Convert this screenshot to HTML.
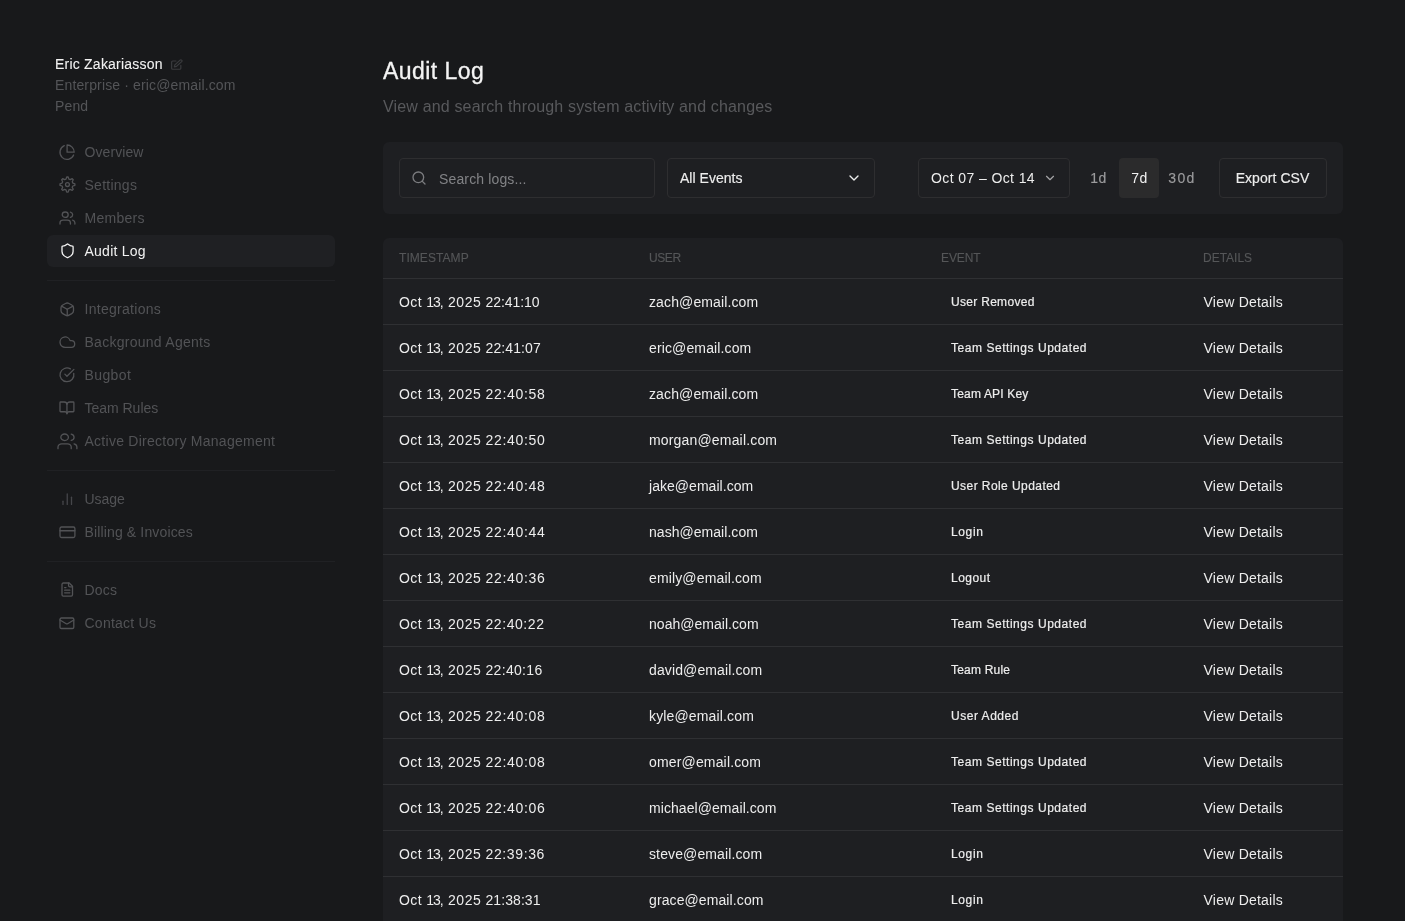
<!DOCTYPE html>
<html lang="en">
<head>
<meta charset="utf-8">
<title>Audit Log</title>
<style>
*{box-sizing:border-box;margin:0;padding:0}
html,body{width:1405px;height:921px;overflow:hidden;background:#18191b}
body{font-family:"Liberation Sans",Arial,sans-serif;color:#ededed;position:relative;-webkit-font-smoothing:antialiased}
#app{position:absolute;left:0;top:0;width:1405px;height:921px;will-change:transform}
.abs{position:absolute;white-space:nowrap}
/* sidebar */
.uname{left:55px;top:55px;font-size:14px;line-height:18px;color:#f2f2f2;letter-spacing:.22px;-webkit-text-stroke:.08px #f2f2f2}
.usub{left:55px;font-size:14px;line-height:18px;color:#545558;letter-spacing:.14px}
.nav{left:47px;width:288px;height:32px;border-radius:6px;font-size:14px;line-height:32px;color:#525356;padding-left:37.5px;letter-spacing:.2px}
.nav.on{background:#1f2023;color:#f2f2f2}
.ic{fill:none;stroke-width:1.3;stroke-linecap:round;stroke-linejoin:round;overflow:visible}
.ic *{vector-effect:non-scaling-stroke}
.hr{left:47px;width:288px;height:1px;background:#202124}
/* main */
h1{left:383px;top:56px;font-size:23px;line-height:30px;font-weight:400;color:#f4f4f4;letter-spacing:.45px;-webkit-text-stroke:.3px #f4f4f4}
.sub{left:383px;top:97px;font-size:16px;line-height:20px;color:#58595c;letter-spacing:.16px}
.card{left:383px;width:960px;background:#1e1f22;border-radius:6px}
.inp{top:158px;height:40px;border:1px solid #2e2e30;border-radius:4px;font-size:14px;line-height:38px;color:#ededed;background:#1e1f22}
.btn-t{top:158px;height:40px;line-height:40px;font-size:14px;color:#9b9b9d;letter-spacing:.4px;-webkit-text-stroke:.15px #9b9b9d;text-align:center;border-radius:4px;padding-left:1px}
table{border-collapse:collapse}
.th{top:238px;height:40px;line-height:40px;font-size:12px;color:#555658;letter-spacing:0;-webkit-text-stroke:.12px #555658}
.row{left:383px;width:960px;height:46px;border-top:1px solid #2f3033}
.row span{position:absolute;top:0;line-height:46px;white-space:nowrap}
.c1{left:16px;font-size:14px;color:#ededed}
.c1 b{position:absolute;top:0;font-weight:400;white-space:pre}
.d1{left:0;letter-spacing:.42px}
.d2{left:27.2px;letter-spacing:-.98px}
.d3{left:48.95px;letter-spacing:.57px}
.d4{left:86.5px}
.c2{left:266px;font-size:14px;color:#ededed}
.c3{left:568px;font-size:12px;color:#ededed;-webkit-text-stroke:.2px #ededed}
.c4{left:820.5px;font-size:14px;letter-spacing:.23px;color:#ededed}
</style>
</head>
<body>
<div id="app">
<!-- SIDEBAR -->
<div class="abs uname">Eric Zakariasson</div>
<svg class="abs" style="left:170px;top:58.8px;width:13px;height:11.8px;fill:none;stroke:#3a3b3e;stroke-width:2.2;stroke-linecap:round;stroke-linejoin:round" viewBox="0 0 24 24" preserveAspectRatio="none"><path d="M11 4H5a2 2 0 0 0-2 2v13a2 2 0 0 0 2 2h13a2 2 0 0 0 2-2v-6"/><path d="M18.5 2.5a2.1 2.1 0 0 1 3 3L12 15l-4 1 1-4z"/></svg>
<div class="abs usub" style="top:76px">Enterprise · eric@email.com</div>
<div class="abs usub" style="top:97px">Pend</div>

<div class="abs nav" style="top:136px;letter-spacing:0.09px">Overview</div>
<div class="abs nav" style="top:169px;letter-spacing:0.26px">Settings</div>
<div class="abs nav" style="top:202px;letter-spacing:0.27px">Members</div>
<div class="abs nav on" style="top:235px;letter-spacing:0.25px">Audit Log</div>
<div class="abs hr" style="top:280px"></div>
<div class="abs nav" style="top:293px;letter-spacing:0.29px">Integrations</div>
<div class="abs nav" style="top:326px;letter-spacing:0.27px">Background Agents</div>
<div class="abs nav" style="top:359px;letter-spacing:0.40px">Bugbot</div>
<div class="abs nav" style="top:392px;letter-spacing:-0.02px">Team Rules</div>
<div class="abs nav" style="top:425px;letter-spacing:0.26px">Active Directory Management</div>
<div class="abs hr" style="top:470px"></div>
<div class="abs nav" style="top:483px;letter-spacing:-0.05px">Usage</div>
<div class="abs nav" style="top:516px;letter-spacing:0.14px">Billing &amp; Invoices</div>
<div class="abs hr" style="top:561px"></div>
<div class="abs nav" style="top:574px;letter-spacing:0.20px">Docs</div>
<div class="abs nav" style="top:607px;letter-spacing:0.24px">Contact Us</div>
<!-- ICONS -->
<svg class="abs ic" style="left:59.90px;top:144.65px;width:14.20px;height:14.45px;stroke:#525356" viewBox="2.00 2.00 20.00 20.00" preserveAspectRatio="none"><path d="M21.21 15.89A10 10 0 1 1 8 2.83"/><path d="M22 12A10 10 0 0 0 12 2v10z"/></svg>
<svg class="abs ic" style="left:59.55px;top:177.35px;width:14.90px;height:15.10px;stroke:#525356" viewBox="2.05 2.05 19.90 19.90" preserveAspectRatio="none"><circle cx="12" cy="12" r="2.6"/><path d="M10.08 4.85L11.04 2.05L12.96 2.05L13.92 4.85L15.70 5.59L18.36 4.28L19.72 5.64L18.41 8.30L19.15 10.08L21.95 11.04L21.95 12.96L19.15 13.92L18.41 15.70L19.72 18.36L18.36 19.72L15.70 18.41L13.92 19.15L12.96 21.95L11.04 21.95L10.08 19.15L8.30 18.41L5.64 19.72L4.28 18.36L5.59 15.70L4.85 13.92L2.05 12.96L2.05 11.04L4.85 10.08L5.59 8.30L4.28 5.64L5.64 4.28L8.30 5.59Z"/></svg>
<svg class="abs ic" style="left:59.55px;top:211.85px;width:14.90px;height:12.10px;stroke:#525356" viewBox="2.00 3.00 20.00 18.00" preserveAspectRatio="none"><path d="M16 21v-2a4 4 0 0 0-4-4H6a4 4 0 0 0-4 4v2"/><circle cx="9" cy="7" r="4"/><path d="M22 21v-2a4 4 0 0 0-3-3.870"/><path d="M16 3.130a4 4 0 0 1 0 7.750"/></svg>
<svg class="abs ic" style="left:61.55px;top:244.15px;width:11.10px;height:13.60px;stroke:#f2f2f2" viewBox="4.00 2.00 16.00 20.00" preserveAspectRatio="none"><path d="M20 13c0 5-3.500 7.500-7.660 8.950a1 1 0 0 1-.67-.010C7.500 20.500 4 18 4 13V6a1 1 0 0 1 1-1c2 0 4.500-1.200 6.240-2.720a1.170 1.170 0 0 1 1.520 0C14.510 3.810 17 5 19 5a1 1 0 0 1 1 1z"/></svg>
<svg class="abs ic" style="left:60.85px;top:303.15px;width:12.50px;height:12.70px;stroke:#525356" viewBox="3.34 2.70 17.32 18.80" preserveAspectRatio="none"><path d="M9.58 3.40Q12.00 2.00 14.42 3.40L18.24 5.60Q20.66 7.00 20.66 9.80L20.66 14.20Q20.66 17.00 18.24 18.40L14.42 20.60Q12.00 22.00 9.58 20.60L5.76 18.40Q3.34 17.00 3.34 14.20L3.34 9.80Q3.34 7.00 5.76 5.60Z"/><path d="M4 7.400 12 12l8-4.600"/><path d="M12 21.500V12"/></svg>
<svg class="abs ic" style="left:59.65px;top:337.15px;width:14.70px;height:10.30px;stroke:#525356" viewBox="2.00 5.00 20.00 14.00" preserveAspectRatio="none"><path d="M17.500 19H9a7 7 0 1 1 6.710-9h1.790a4.500 4.500 0 1 1 0 9z"/></svg>
<svg class="abs ic" style="left:60.15px;top:368.45px;width:13.90px;height:13.70px;stroke:#525356" viewBox="2.00 2.00 20.00 20.00" preserveAspectRatio="none"><path d="M21.800 10A10 10 0 1 1 17 3.340"/><path d="m9 11 3 3L22 4"/></svg>
<svg class="abs ic" style="left:60.15px;top:401.65px;width:13.90px;height:11.70px;stroke:#525356" viewBox="2.00 3.00 20.00 18.00" preserveAspectRatio="none"><path d="M12 7v14"/><path d="M3 18a1 1 0 0 1-1-1V4a1 1 0 0 1 1-1h5a4 4 0 0 1 4 4 4 4 0 0 1 4-4h5a1 1 0 0 1 1 1v13a1 1 0 0 1-1 1h-6a3 3 0 0 0-3 3 3 3 0 0 0-3-3z"/></svg>
<svg class="abs ic" style="left:57.65px;top:433.65px;width:18.90px;height:14.70px;stroke:#525356" viewBox="2.00 3.00 20.00 18.00" preserveAspectRatio="none"><path d="M16 21v-2a4 4 0 0 0-4-4H6a4 4 0 0 0-4 4v2"/><circle cx="9" cy="7" r="4"/><path d="M22 21v-2a4 4 0 0 0-3-3.870"/><path d="M16 3.130a4 4 0 0 1 0 7.750"/></svg>
<svg class="abs ic" style="left:62.95px;top:493.65px;width:8.50px;height:10.40px;stroke:#45464a" viewBox="6.00 4.00 12.00 16.00" preserveAspectRatio="none"><path d="M6 20v-5"/><path d="M12 20V4"/><path d="M18 20V9"/></svg>
<svg class="abs ic" style="left:59.65px;top:526.65px;width:14.90px;height:10.50px;stroke:#525356" viewBox="2.00 5.00 20.00 14.00" preserveAspectRatio="none"><rect x="2" y="5" width="20" height="14" rx="2"/><path d="M2 10h20"/></svg>
<svg class="abs ic" style="left:61.95px;top:583.45px;width:10.50px;height:13.10px;stroke:#525356" viewBox="4.00 2.00 16.00 20.00" preserveAspectRatio="none"><path d="M15 2H6a2 2 0 0 0-2 2v16a2 2 0 0 0 2 2h12a2 2 0 0 0 2-2V7z"/><path d="M14 2v4a2 2 0 0 0 2 2h4"/><path d="M10 9H8"/><path d="M16 13H8"/><path d="M16 17H8"/></svg>
<svg class="abs ic" style="left:60.25px;top:617.85px;width:13.80px;height:10.50px;stroke:#525356" viewBox="2.00 4.00 20.00 16.00" preserveAspectRatio="none"><rect x="2" y="4" width="20" height="16" rx="2"/><path d="m22 7-8.970 5.700a1.940 1.940 0 0 1-2.060 0L2 7"/></svg>
<!-- /ICONS -->

<!-- MAIN -->
<h1 class="abs">Audit Log</h1>
<div class="abs sub">View and search through system activity and changes</div>
<div class="abs card" style="top:142px;height:72px"></div>
<div class="abs card" style="top:238px;height:700px"></div>
<div class="abs inp" style="left:399px;width:256px;padding-left:39px;padding-top:1px;color:#828386;letter-spacing:.14px">Search logs...</div>
<svg class="abs" style="left:411px;top:170px;width:16px;height:16px;fill:none;stroke:#7b7c7f;stroke-width:2;stroke-linecap:round;stroke-linejoin:round" viewBox="0 0 24 24"><circle cx="11" cy="11" r="8"/><path d="m21 21-4.300-4.300"/></svg>
<div class="abs inp" style="left:667px;width:208px;padding-left:12px;letter-spacing:.02px;-webkit-text-stroke:.15px #ededed">All Events</div>
<svg class="abs" style="left:846px;top:170px;width:16px;height:16px;fill:none;stroke:#ededed;stroke-width:2;stroke-linecap:round;stroke-linejoin:round" viewBox="0 0 24 24"><path d="m6 9 6 6 6-6"/></svg>
<div class="abs inp" style="left:918px;width:152px;padding-left:12px;letter-spacing:.4px">Oct 07 – Oct 14</div>
<svg class="abs" style="left:1043px;top:171px;width:14px;height:14px;fill:none;stroke:#a5a5a7;stroke-width:2;stroke-linecap:round;stroke-linejoin:round" viewBox="0 0 24 24"><path d="m6 9 6 6 6-6"/></svg>
<div class="abs btn-t" style="left:1078px;width:40px">1d</div>
<div class="abs btn-t" style="left:1119px;width:40px;background:#2b2b2c;color:#f2f2f2;-webkit-text-stroke:0">7d</div>
<div class="abs btn-t" style="left:1160px;width:44px;letter-spacing:1.4px;padding-left:0">30d</div>
<div class="abs inp" style="left:1219px;width:108px;text-align:center;padding-right:1px;letter-spacing:.06px;-webkit-text-stroke:.15px #ededed">Export CSV</div>

<div class="abs th" style="left:399px;letter-spacing:.07px">TIMESTAMP</div>
<div class="abs th" style="left:649px;letter-spacing:-.4px">USER</div>
<div class="abs th" style="left:941px;letter-spacing:-.1px">EVENT</div>
<div class="abs th" style="left:1203px">DETAILS</div>
<!-- ROWS -->
<div class="abs row" style="top:278px"><span class="c1"><b class="d1">Oct </b><b class="d2">13, </b><b class="d3">2025 </b><b class="d4" style="letter-spacing:-0.07px">22:41:10</b></span><span class="c2" style="letter-spacing:0.12px">zach@email.com</span><span class="c3" style="letter-spacing:0.30px">User Removed</span><span class="c4">View Details</span></div>
<div class="abs row" style="top:324px"><span class="c1"><b class="d1">Oct </b><b class="d2">13, </b><b class="d3">2025 </b><b class="d4" style="letter-spacing:0.10px">22:41:07</b></span><span class="c2" style="letter-spacing:0.13px">eric@email.com</span><span class="c3" style="letter-spacing:0.54px">Team Settings Updated</span><span class="c4">View Details</span></div>
<div class="abs row" style="top:370px"><span class="c1"><b class="d1">Oct </b><b class="d2">13, </b><b class="d3">2025 </b><b class="d4" style="letter-spacing:0.70px">22:40:58</b></span><span class="c2" style="letter-spacing:0.12px">zach@email.com</span><span class="c3" style="letter-spacing:0.18px">Team API Key</span><span class="c4">View Details</span></div>
<div class="abs row" style="top:416px"><span class="c1"><b class="d1">Oct </b><b class="d2">13, </b><b class="d3">2025 </b><b class="d4" style="letter-spacing:0.67px">22:40:50</b></span><span class="c2" style="letter-spacing:0.17px">morgan@email.com</span><span class="c3" style="letter-spacing:0.54px">Team Settings Updated</span><span class="c4">View Details</span></div>
<div class="abs row" style="top:462px"><span class="c1"><b class="d1">Oct </b><b class="d2">13, </b><b class="d3">2025 </b><b class="d4" style="letter-spacing:0.70px">22:40:48</b></span><span class="c2" style="letter-spacing:0.04px">jake@email.com</span><span class="c3" style="letter-spacing:0.43px">User Role Updated</span><span class="c4">View Details</span></div>
<div class="abs row" style="top:508px"><span class="c1"><b class="d1">Oct </b><b class="d2">13, </b><b class="d3">2025 </b><b class="d4" style="letter-spacing:0.70px">22:40:44</b></span><span class="c2" style="letter-spacing:0.04px">nash@email.com</span><span class="c3" style="letter-spacing:0.63px">Login</span><span class="c4">View Details</span></div>
<div class="abs row" style="top:554px"><span class="c1"><b class="d1">Oct </b><b class="d2">13, </b><b class="d3">2025 </b><b class="d4" style="letter-spacing:0.67px">22:40:36</b></span><span class="c2" style="letter-spacing:0.14px">emily@email.com</span><span class="c3" style="letter-spacing:0.47px">Logout</span><span class="c4">View Details</span></div>
<div class="abs row" style="top:600px"><span class="c1"><b class="d1">Oct </b><b class="d2">13, </b><b class="d3">2025 </b><b class="d4" style="letter-spacing:0.56px">22:40:22</b></span><span class="c2" style="letter-spacing:0.03px">noah@email.com</span><span class="c3" style="letter-spacing:0.54px">Team Settings Updated</span><span class="c4">View Details</span></div>
<div class="abs row" style="top:646px"><span class="c1"><b class="d1">Oct </b><b class="d2">13, </b><b class="d3">2025 </b><b class="d4" style="letter-spacing:0.31px">22:40:16</b></span><span class="c2" style="letter-spacing:0.12px">david@email.com</span><span class="c3" style="letter-spacing:0.21px">Team Rule</span><span class="c4">View Details</span></div>
<div class="abs row" style="top:692px"><span class="c1"><b class="d1">Oct </b><b class="d2">13, </b><b class="d3">2025 </b><b class="d4" style="letter-spacing:0.67px">22:40:08</b></span><span class="c2" style="letter-spacing:0.15px">kyle@email.com</span><span class="c3" style="letter-spacing:0.52px">User Added</span><span class="c4">View Details</span></div>
<div class="abs row" style="top:738px"><span class="c1"><b class="d1">Oct </b><b class="d2">13, </b><b class="d3">2025 </b><b class="d4" style="letter-spacing:0.67px">22:40:08</b></span><span class="c2" style="letter-spacing:0.16px">omer@email.com</span><span class="c3" style="letter-spacing:0.54px">Team Settings Updated</span><span class="c4">View Details</span></div>
<div class="abs row" style="top:784px"><span class="c1"><b class="d1">Oct </b><b class="d2">13, </b><b class="d3">2025 </b><b class="d4" style="letter-spacing:0.67px">22:40:06</b></span><span class="c2" style="letter-spacing:0.07px">michael@email.com</span><span class="c3" style="letter-spacing:0.54px">Team Settings Updated</span><span class="c4">View Details</span></div>
<div class="abs row" style="top:830px"><span class="c1"><b class="d1">Oct </b><b class="d2">13, </b><b class="d3">2025 </b><b class="d4" style="letter-spacing:0.63px">22:39:36</b></span><span class="c2" style="letter-spacing:0.12px">steve@email.com</span><span class="c3" style="letter-spacing:0.63px">Login</span><span class="c4">View Details</span></div>
<div class="abs row" style="top:876px"><span class="c1"><b class="d1">Oct </b><b class="d2">13, </b><b class="d3">2025 </b><b class="d4" style="letter-spacing:0.07px">21:38:31</b></span><span class="c2" style="letter-spacing:0.10px">grace@email.com</span><span class="c3" style="letter-spacing:0.63px">Login</span><span class="c4">View Details</span></div>
<!-- /ROWS -->
</div>
</body>
</html>
